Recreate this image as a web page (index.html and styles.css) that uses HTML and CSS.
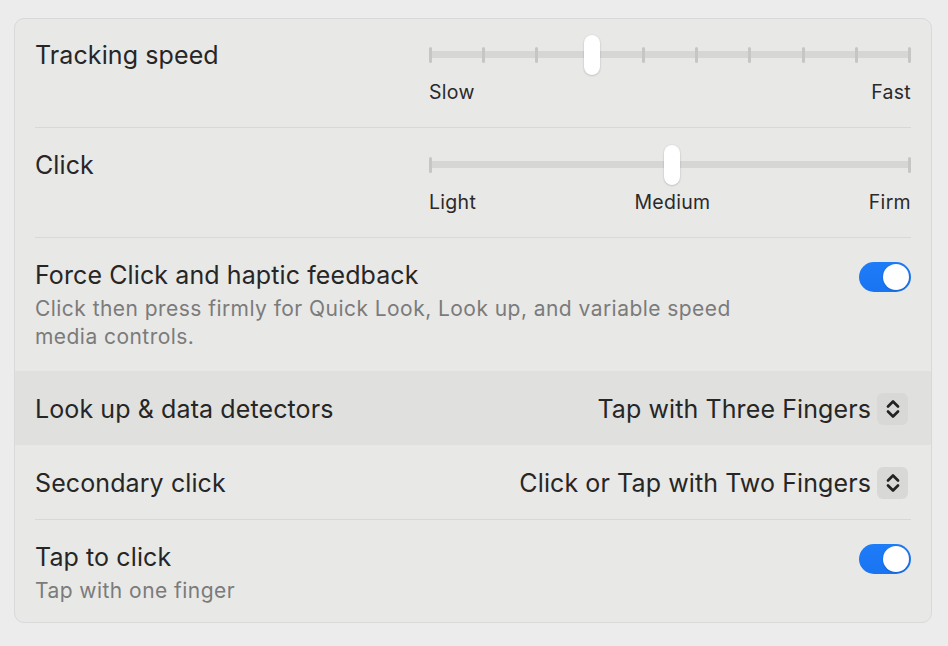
FILE: index.html
```html
<!DOCTYPE html>
<html lang="en">
<head>
    <meta charset="UTF-8">
    <meta name="viewport" content="width=device-width, initial-scale=1.0">
    <title>Trackpad</title>
    <link rel="stylesheet" href="styles.css">
</head>
<body>
    <div class="panel">

        <div class="row">
            <div class="row-inner row-slider first">
                <div class="title">Tracking speed</div>
                <div class="slider">
                    <div class="track">
                        <div class="ticks">
                            <span></span><span></span><span></span><span></span><span></span>
                            <span></span><span></span><span></span><span></span><span></span>
                        </div>
                        <div class="knob" style="left: 33.33%"></div>
                    </div>
                    <div class="slider-labels">
                        <span>Slow</span>
                        <span>Fast</span>
                    </div>
                </div>
            </div>
        </div>

        <div class="row">
            <div class="row-inner row-slider">
                <div class="title">Click</div>
                <div class="slider">
                    <div class="track">
                        <div class="ticks">
                            <span></span><span></span>
                        </div>
                        <div class="knob" style="left: 50%"></div>
                    </div>
                    <div class="slider-labels">
                        <span>Light</span>
                        <span>Medium</span>
                        <span>Firm</span>
                    </div>
                </div>
            </div>
        </div>

        <div class="row">
            <div class="row-inner row-toggle">
                <div class="text">
                    <div class="title">Force Click and haptic feedback</div>
                    <div class="desc">Click then press firmly for Quick Look, Look up, and variable speed<br>media controls.</div>
                </div>
                <div class="toggle"><span></span></div>
            </div>
        </div>

        <div class="row highlight">
            <div class="row-inner row-popup">
                <div class="title">Look up &amp; data detectors</div>
                <div class="popup">
                    <span>Tap with Three Fingers</span>
                    <div class="stepper">
                        <svg width="16" height="22" viewBox="0 0 16 22">
                            <path d="M3 8.5 L8 3.5 L13 8.5 M3 13.5 L8 18.5 L13 13.5" fill="none" stroke="#222" stroke-width="2.7" stroke-linecap="round" stroke-linejoin="round"/>
                        </svg>
                    </div>
                </div>
            </div>
        </div>

        <div class="row">
            <div class="row-inner row-popup">
                <div class="title">Secondary click</div>
                <div class="popup">
                    <span>Click or Tap with Two Fingers</span>
                    <div class="stepper">
                        <svg width="16" height="22" viewBox="0 0 16 22">
                            <path d="M3 8.5 L8 3.5 L13 8.5 M3 13.5 L8 18.5 L13 13.5" fill="none" stroke="#222" stroke-width="2.7" stroke-linecap="round" stroke-linejoin="round"/>
                        </svg>
                    </div>
                </div>
            </div>
        </div>

        <div class="row">
            <div class="row-inner row-toggle">
                <div class="text">
                    <div class="title">Tap to click</div>
                    <div class="desc">Tap with one finger</div>
                </div>
                <div class="toggle"><span></span></div>
            </div>
        </div>

    </div>
</body>
</html>
```

FILE: styles.css
```css
body {
    margin: 0;
    background-color: #ececec;
    font-family: "Inter", "Noto Sans", sans-serif;
    color: #262626;
}
.panel {
    margin: 18px 0 0 14px;
    width: 916px;
    height: 603px;
    background-color: #e8e8e7;
    border: 1px solid #d9d9d9;
    border-radius: 10px;
    overflow: hidden;
}
.row {
    padding: 0 20px;
}
.row + .row .row-inner {
    border-top: 1px solid #d8d8d7;
}
.highlight {
    background-color: #e0e0df;
}
.row.highlight .row-inner,
.highlight + .row .row-inner {
    border-top-color: transparent;
}
.title {
    font-size: 25px;
    line-height: 30px;
    letter-spacing: 0.1px;
}
.desc {
    font-size: 21px;
    line-height: 28px;
    letter-spacing: 0.45px;
    color: #7b7b7b;
    margin-top: 5px;
}

/* slider rows */
.row-slider {
    display: flex;
    justify-content: space-between;
    height: 110px;
    padding-top: 22px;
    box-sizing: border-box;
}
.row-slider.first {
    height: 108px;
    padding-top: 21px;
}
.slider {
    width: 482px;
    margin-top: -5px;
}
.track {
    position: relative;
    height: 7px;
    margin-top: 16px;
    background-color: #d6d6d5;
    border-radius: 4px;
}
.ticks {
    display: flex;
    justify-content: space-between;
    height: 100%;
    align-items: center;
}
.ticks span {
    width: 3px;
    height: 16px;
    border-radius: 2px;
    background-color: #c6c6c5;
}
.knob {
    position: absolute;
    top: -16px;
    width: 16px;
    height: 40px;
    margin-left: -6px;
    background-color: #fff;
    border-radius: 8px;
    box-shadow: 0 0.5px 2px rgba(0, 0, 0, 0.25);
}
.slider-labels {
    display: flex;
    justify-content: space-between;
    margin-top: 22px;
    font-size: 19.5px;
    line-height: 24px;
    letter-spacing: 0.3px;
    color: #2a2a2a;
}

/* toggle rows */
.row-toggle {
    display: flex;
    justify-content: space-between;
    align-items: flex-start;
    padding: 22px 0 20px;
}
.toggle {
    width: 52px;
    height: 30px;
    margin-top: 2px;
    border-radius: 15px;
    background: linear-gradient(#1e7cf7, #1a74f2);
    display: flex;
    justify-content: flex-end;
    align-items: center;
    padding: 0 2px;
    box-sizing: border-box;
}
.toggle span {
    width: 26px;
    height: 26px;
    border-radius: 50%;
    background-color: #fff;
    box-shadow: 0 0.5px 2px rgba(0, 0, 0, 0.25);
}

/* popup rows */
.row-popup {
    display: flex;
    justify-content: space-between;
    align-items: center;
    height: 74px;
    box-sizing: border-box;
}
.popup {
    display: flex;
    align-items: center;
    gap: 6px;
    font-size: 25px;
    letter-spacing: 0.1px;
    margin-right: 3px;
}
.stepper {
    width: 31px;
    height: 32px;
    border-radius: 6px;
    background-color: #d8d8d7;
    display: flex;
    align-items: center;
    justify-content: center;
}
```
